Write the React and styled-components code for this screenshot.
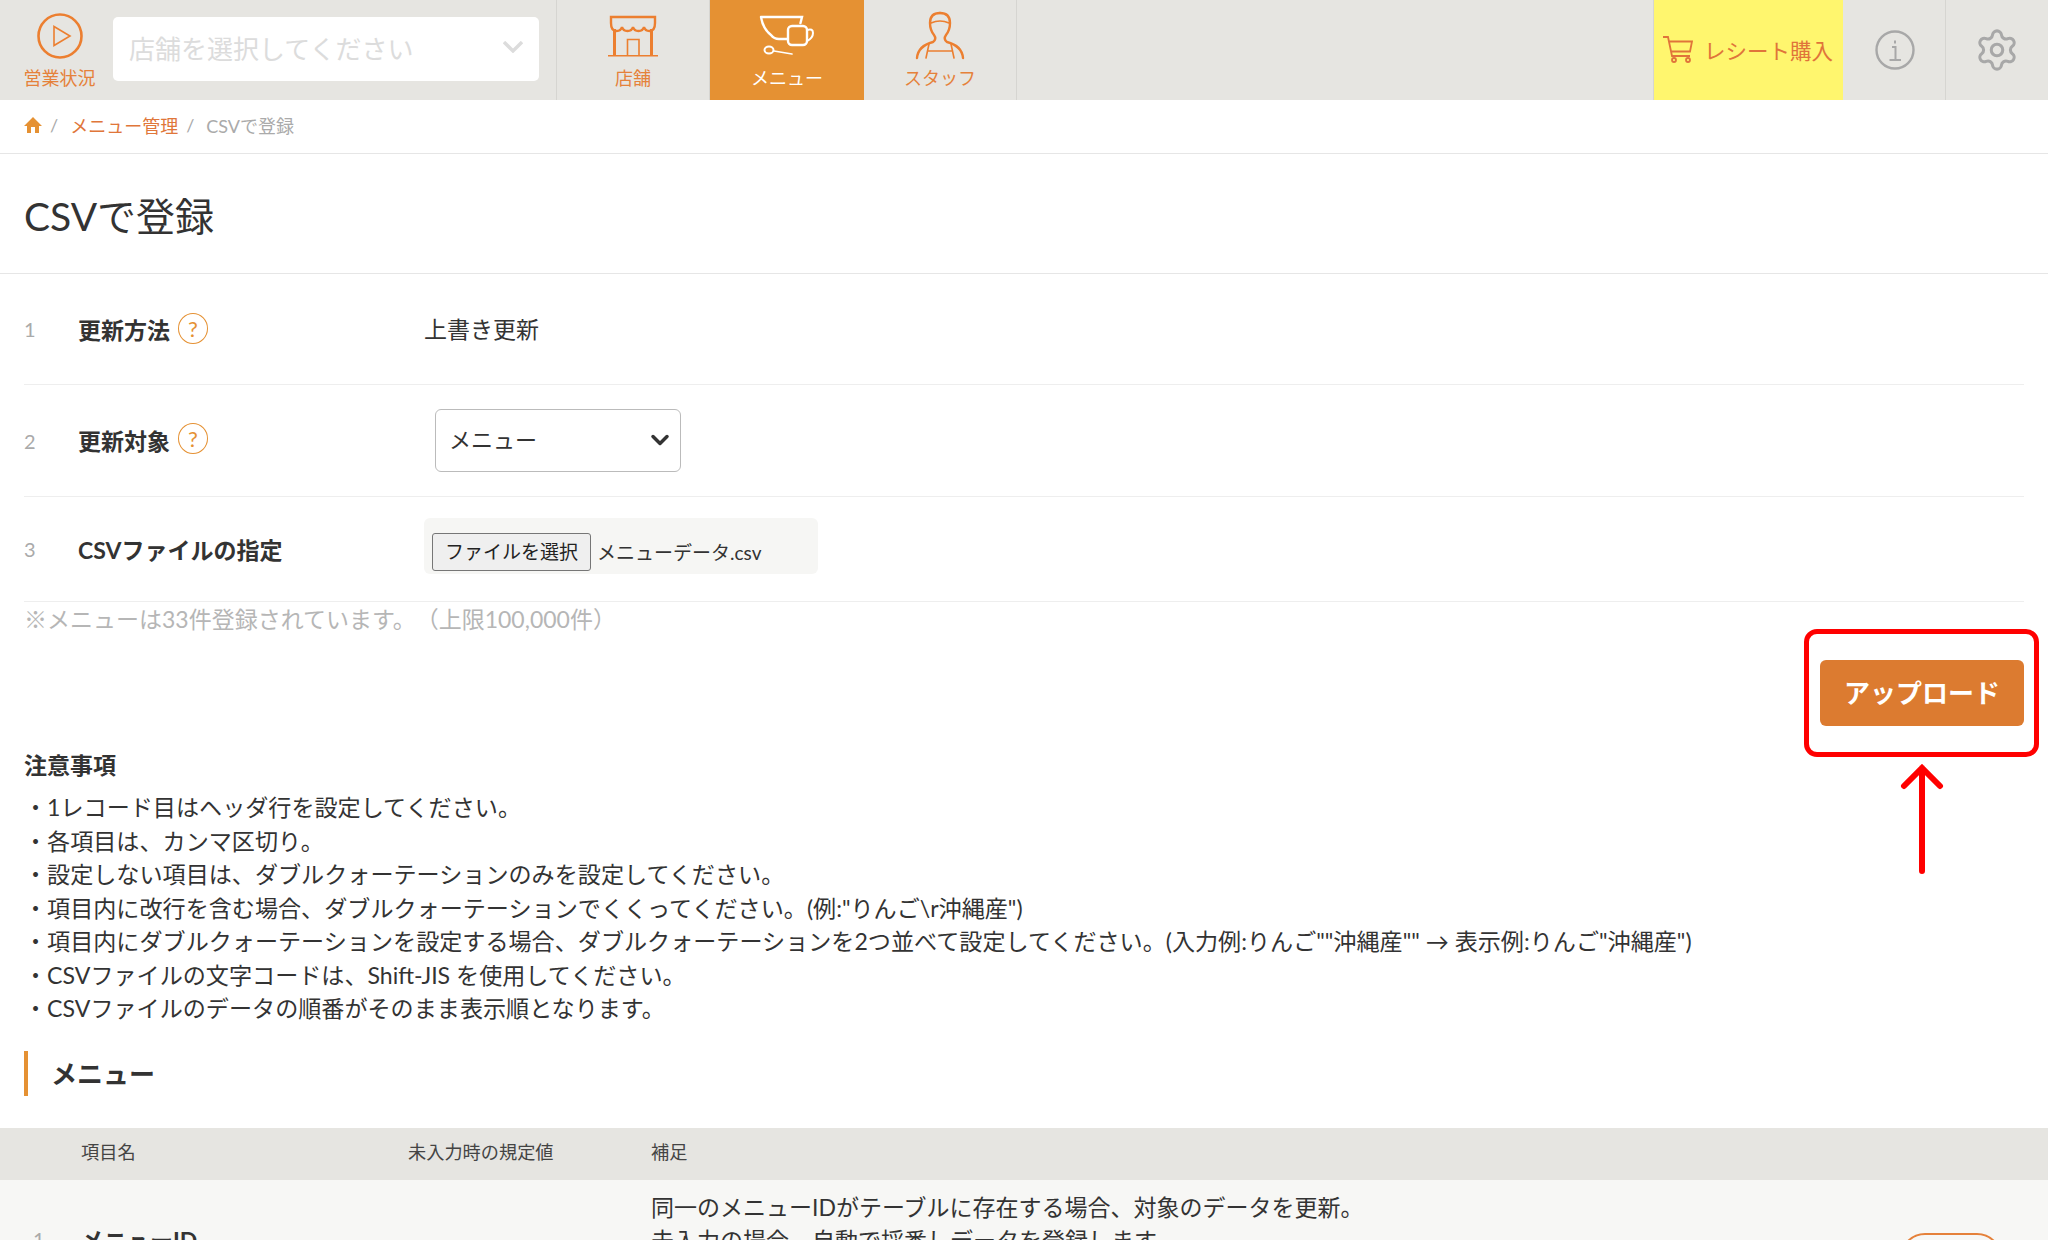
import React from 'react';
import styled, { createGlobalStyle } from 'styled-components';
import { Settings, ChevronDown } from 'lucide-react';

const GlobalStyle = createGlobalStyle`
    html, body {
        margin: 0;
        height: 1240px;
        overflow: hidden;
        background: #fff;
    }
    body {
        font-family: Lato, "Noto Sans CJK JP", sans-serif;
        font-size: 23px;
        color: #333;
        text-spacing-trim: space-all;
    }
`;

const Page = styled.div`
    position: relative;
    width: 2048px;
    height: 1240px;
    overflow: hidden;
`;

const Header = styled.header`
    display: flex;
    height: 100px;
    background: #e6e5e1;
`;

const StatusLink = styled.div`
    width: 113px;
    padding-top: 13px;
    display: flex;
    flex-direction: column;
    align-items: center;
    box-sizing: border-box;
    color: #e5813a;
    font-size: 18px;
    line-height: 24px;
    gap: 7px;
    svg { margin-right: -6px; }
    span { margin-right: -6px; }
`;

const ShopSelectWrap = styled.div`
    width: 444px;
    border-right: 1px solid #d6d5d1;
    padding-top: 17px;
    box-sizing: border-box;
`;

const ShopSelect = styled.div`
    width: 426px;
    height: 64px;
    background: #fff;
    border-radius: 5px;
    display: flex;
    align-items: center;
    justify-content: space-between;
    padding: 0 16px 4px 16px;
    box-sizing: border-box;
    color: #dcdcdc;
    font-size: 26px;
`;

const NavTile = styled.div`
    width: ${p => p.$active ? '154px' : '153px'};
    box-sizing: border-box;
    display: flex;
    flex-direction: column;
    align-items: center;
    padding-top: 11px;
    background: ${p => p.$active ? '#e59133' : 'transparent'};
    color: ${p => p.$active ? '#fff' : '#e5813a'};
    border-right: ${p => p.$active ? 'none' : '1px solid #d6d5d1'};
    font-size: 18px;
    line-height: 24px;
    svg { height: 50px; margin-bottom: 5px; }
`;

const Spacer = styled.div`
    flex: 1;
`;

const BuyLink = styled.div`
    width: 190px;
    box-sizing: border-box;
    background: #fff66e;
    border-left: 1px solid #d6d5d1;
    display: flex;
    align-items: center;
    padding: 0 0 2px 9px;
    gap: 11px;
    color: #e0743a;
    font-size: 21.5px;
`;

const IconTile = styled.div`
    width: ${p => p.$width}px;
    display: flex;
    align-items: center;
    justify-content: center;
    box-sizing: border-box;
    border-right: ${p => p.$divider ? '1px solid #d6d5d1' : 'none'};
    color: #a8a8a8;
    svg { margin-left: ${p => p.$divider ? '2px' : '0'}; }
`;

const Breadcrumb = styled.nav`
    height: 54px;
    box-sizing: border-box;
    border-bottom: 1px solid #e6e6e6;
    padding: 0 24px 4px;
    display: flex;
    align-items: center;
    gap: 8px;
    font-size: 18px;
    color: #aaa;
`;

const CrumbLink = styled.a`
    color: #e0763a;
    margin-left: 4px;
`;

const CrumbCurrent = styled.span`
    margin-left: 4px;
`;

const Title = styled.h1`
    margin: 0;
    height: 120px;
    box-sizing: border-box;
    border-bottom: 1px solid #e6e6e6;
    padding: 0 24px;
    display: flex;
    align-items: center;
    font-size: 39px;
    font-weight: 400;
    color: #333;
`;

const Form = styled.div`
    padding: 0 24px;
`;

const Row = styled.div`
    display: flex;
    align-items: center;
    height: ${p => p.$height}px;
    border-bottom: 1px solid #eee;
    box-sizing: border-box;
`;

const RowNumber = styled.div`
    width: 54px;
    color: #aaa;
    font-size: 20px;
`;

const RowLabel = styled.div`
    width: 346px;
    display: flex;
    align-items: center;
    gap: 8px;
    margin-top: ${p => p.$lift ? '-2px' : '0'};
    font-weight: 700;
    font-size: 23px;
    color: #333;
`;

const Help = styled.span`
    width: 30px;
    height: 31px;
    margin-top: -2px;
    box-sizing: border-box;
    border: 1.5px solid #e59133;
    border-radius: 50%;
    color: #e59133;
    font-size: 22px;
    font-weight: 400;
    display: flex;
    align-items: center;
    justify-content: center;
`;

const PlainValue = styled.span`
    margin-top: -2px;
`;

const SelectWrap = styled.div`
    position: relative;
    margin-left: 11px;
    width: 246px;
    height: 63px;
    svg {
        position: absolute;
        right: 7px;
        top: 17px;
        pointer-events: none;
    }
`;

const Select = styled.select`
    width: 100%;
    height: 100%;
    appearance: none;
    background: #fff;
    border: 1px solid #bbb;
    border-radius: 6px;
    padding: 0 13px 2px;
    font: inherit;
    font-size: 22px;
    color: #333;
`;

const FileBox = styled.div`
    width: 394px;
    height: 56px;
    margin-top: -6px;
    background: #f6f6f4;
    border-radius: 6px;
    display: flex;
    align-items: center;
    padding: 11px 8px 0;
    box-sizing: border-box;
    gap: 6px;
    font-size: 19px;
`;

const FileButton = styled.button`
    width: 159px;
    height: 38px;
    padding: 0 0 2px;
    background: #efefef;
    border: 1px solid #767676;
    border-radius: 3px;
    font: inherit;
    font-size: 19px;
    color: #222;
`;

const Notice = styled.p`
    margin: 0;
    line-height: 34px;
    font-size: 23px;
    color: #b6b6b6;
`;

const UploadRow = styled.div`
    display: flex;
    justify-content: flex-end;
    margin-top: 24px;
`;

const UploadButton = styled.button`
    width: 204px;
    height: 66px;
    padding: 0 0 4px;
    border: none;
    border-radius: 6px;
    background: #dc7b30;
    color: #fff;
    font: inherit;
    font-size: 26px;
    font-weight: 700;
`;

const NotesTitle = styled.h3`
    margin: 22px 0 0;
    font-size: 23px;
    line-height: 34px;
    font-weight: 700;
    color: #333;
`;

const NotesList = styled.ul`
    list-style: none;
    margin: 9px 0 0;
    padding: 0;
    li {
        line-height: 33.5px;
        font-size: 23.1px;
        color: #333;
    }
`;

const SectionHeading = styled.h2`
    margin: 25px 0 0;
    height: 45px;
    border-left: 4px solid #e59133;
    padding: 0 0 2px 23px;
    box-sizing: border-box;
    display: flex;
    align-items: center;
    font-size: 26px;
    font-weight: 700;
    color: #333;
`;

const TableHead = styled.div`
    margin-top: 32px;
    height: 52px;
    padding-bottom: 5px;
    box-sizing: border-box;
    background: #e6e5e1;
    display: flex;
    align-items: center;
    font-size: 18.2px;
    color: #444;
`;

const TableRow = styled.div`
    height: 118px;
    background: #f7f7f5;
    display: flex;
    align-items: center;
    position: relative;
    font-size: 23px;
    color: #333;
`;

const Cell = styled.div`
    width: ${p => p.$width}px;
    flex: none;
`;

const IdCell = styled(Cell)`
    font-weight: 700;
`;

const NumCell = styled(Cell)`
    color: #aaa;
    font-size: 20px;
    padding-left: 33px;
    box-sizing: border-box;
`;

const NoteCell = styled(Cell)`
    align-self: flex-start;
    padding-top: 11px;
    line-height: 33px;
`;

const OutlineButton = styled.button`
    position: absolute;
    left: 1900px;
    top: 53px;
    width: 102px;
    height: 50px;
    background: transparent;
    border: 2px solid #e5813a;
    border-radius: 25px;
`;

const Annotation = styled.div`
    position: absolute;
    left: 1804px;
    top: 629px;
    width: 235px;
    height: 128px;
    box-sizing: border-box;
    border: 5.5px solid #ff0000;
    border-radius: 13px;
    pointer-events: none;
`;

const Arrow = styled.svg`
    position: absolute;
    left: 1900px;
    top: 764px;
    pointer-events: none;
`;

const StoreIcon = () => (
    <svg viewBox="-1 0 52 44" width="52" fill="none" stroke="#ec7f30">
        <path strokeWidth="2.4" d="M3 3H47V9Q47 17 41.5 17Q37 17 36 13Q35 17 30.5 17Q26 17 25 13Q24 17 19.5 17Q15 17 14 13Q13 17 8.5 17Q3 17 3 9Z" />
        <path strokeWidth="3" d="M6.5 15V41M43.5 15V41" />
        <path strokeWidth="1.6" d="M0 41.7H50M19.5 41V25.5H31V41" />
    </svg>
);

const CupIcon = () => (
    <svg viewBox="40 14 56 44" width="56" fill="none" stroke="#fff" strokeWidth="2" strokeLinecap="round">
        <path strokeWidth="2.4" d="M42 17H83L81.500 23M42 17Q44 29 52 35Q55 39 60 39H68" />
        <rect x="69" y="26" width="19" height="19" rx="4" strokeWidth="2.4" />
        <path d="M88 30Q94 28 94 33Q94 38 88 41" />
        <ellipse cx="50" cy="50" rx="4.500" ry="3.500" />
        <path strokeWidth="1.6" d="M55 51L73 54" />
    </svg>
);

const StaffIcon = () => (
    <svg viewBox="44 12 52 50" width="52" fill="none" stroke="#ec7f30" strokeWidth="2.400" strokeLinecap="round">
        <path d="M70 14Q60 14 60 24Q60 31 64 36Q67 40 63 43Q48 47 47 59" />
        <path d="M70 14Q80 14 80 24Q80 31 76 36Q73 40 77 43Q92 47 93 59" />
        <path strokeWidth="1.600" d="M61 24Q70 20 79 24M59 45L56 59M81 45L84 59M58 52H82" />
    </svg>
);

const PlayIcon = () => (
    <svg width="46" height="46" viewBox="0 0 46 46" fill="none" stroke="#ec7f30">
        <circle cx="23" cy="23" r="21.500" strokeWidth="2.600" />
        <path strokeWidth="1.600" d="M17 13.500L33 23L17 32.500Z" />
    </svg>
);

const CartIcon = () => (
    <svg width="30" height="27" viewBox="0 0 30 27" fill="none" stroke="#e0743a" strokeWidth="1.800">
        <path d="M0 1H5L9 20H27M6 5.500H29L27 15.500H8" />
        <circle cx="11" cy="24" r="2" />
        <circle cx="25" cy="24" r="2" />
    </svg>
);

const InfoIcon = () => (
    <svg width="40" height="40" viewBox="0 0 40 40" fill="none" stroke="#a8a8a8" strokeWidth="2.400">
        <circle cx="20" cy="20" r="18.500" />
        <path strokeWidth="2" d="M17 17H20.500V30M14.500 30H26M20 10.500V13.500" />
    </svg>
);

const SmallChevron = () => (
    <svg width="20" height="12" viewBox="0 0 20 12" fill="none" stroke="#dcdcdc" strokeWidth="3.400">
        <path d="M1 1L10 10L19 1" />
    </svg>
);

const HomeIcon = () => (
    <svg width="18" height="16" viewBox="0 0 18 16" fill="#e59133">
        <path d="M9 0L18 9H15V16H11V10H7V16H3V9H0Z" />
    </svg>
);

const notes = [
    '1レコード目はヘッダ行を設定してください。',
    '各項目は、カンマ区切り。',
    '設定しない項目は、ダブルクォーテーションのみを設定してください。',
    '項目内に改行を含む場合、ダブルクォーテーションでくくってください。(例:"りんご\\r沖縄産")',
    '項目内にダブルクォーテーションを設定する場合、ダブルクォーテーションを2つ並べて設定してください。(入力例:りんご""沖縄産"" → 表示例:りんご"沖縄産")',
    'CSVファイルの文字コードは、Shift-JIS を使用してください。',
    'CSVファイルのデータの順番がそのまま表示順となります。',
];

const App = () => {
    return (
        <Page>
            <GlobalStyle />
            <Header>
                <StatusLink>
                    <PlayIcon />
                    <span>営業状況</span>
                </StatusLink>
                <ShopSelectWrap>
                    <ShopSelect>
                        店舗を選択してください
                        <SmallChevron />
                    </ShopSelect>
                </ShopSelectWrap>
                <NavTile>
                    <StoreIcon />
                    店舗
                </NavTile>
                <NavTile $active>
                    <CupIcon />
                    メニュー
                </NavTile>
                <NavTile>
                    <StaffIcon />
                    スタッフ
                </NavTile>
                <Spacer />
                <BuyLink>
                    <CartIcon />
                    レシート購入
                </BuyLink>
                <IconTile $width={103} $divider>
                    <InfoIcon />
                </IconTile>
                <IconTile $width={102}>
                    <Settings size={46} strokeWidth={1.6} />
                </IconTile>
            </Header>

            <Breadcrumb>
                <HomeIcon />
                <span>/</span>
                <CrumbLink>メニュー管理</CrumbLink>
                <span>/</span>
                <CrumbCurrent>CSVで登録</CrumbCurrent>
            </Breadcrumb>

            <Title>CSVで登録</Title>

            <Form>
                <Row $height={111}>
                    <RowNumber>1</RowNumber>
                    <RowLabel>更新方法<Help>?</Help></RowLabel>
                    <PlainValue>上書き更新</PlainValue>
                </Row>
                <Row $height={112}>
                    <RowNumber>2</RowNumber>
                    <RowLabel $lift>更新対象<Help>?</Help></RowLabel>
                    <SelectWrap>
                        <Select defaultValue="menu">
                            <option value="menu">メニュー</option>
                        </Select>
                        <ChevronDown size={28} strokeWidth={3} color="#333" />
                    </SelectWrap>
                </Row>
                <Row $height={105}>
                    <RowNumber>3</RowNumber>
                    <RowLabel>CSVファイルの指定</RowLabel>
                    <FileBox>
                        <FileButton>ファイルを選択</FileButton>
                        <span>メニューデータ.csv</span>
                    </FileBox>
                </Row>
                <Notice>※メニューは33件登録されています。（上限100,000件）</Notice>
                <UploadRow>
                    <UploadButton>アップロード</UploadButton>
                </UploadRow>
                <NotesTitle>注意事項</NotesTitle>
                <NotesList>
                    {notes.map(note => <li key={note}>・{note}</li>)}
                </NotesList>
                <SectionHeading>メニュー</SectionHeading>
            </Form>

            <TableHead>
                <Cell $width={81} />
                <Cell $width={327}>項目名</Cell>
                <Cell $width={243}>未入力時の規定値</Cell>
                <Cell>補足</Cell>
            </TableHead>
            <TableRow>
                <NumCell $width={81}>1</NumCell>
                <IdCell $width={570}>メニューID</IdCell>
                <NoteCell>
                    同一のメニューIDがテーブルに存在する場合、対象のデータを更新。<br />
                    未入力の場合、自動で採番しデータを登録します。
                </NoteCell>
                <OutlineButton />
            </TableRow>

            <Annotation />
            <Arrow width="44" height="112" viewBox="0 0 44 112" fill="none" stroke="#ff0000" strokeWidth="6" strokeLinecap="round">
                <path d="M22 4V107M4 22L22 4L40 22" />
            </Arrow>
        </Page>
    );
};

export default App;
